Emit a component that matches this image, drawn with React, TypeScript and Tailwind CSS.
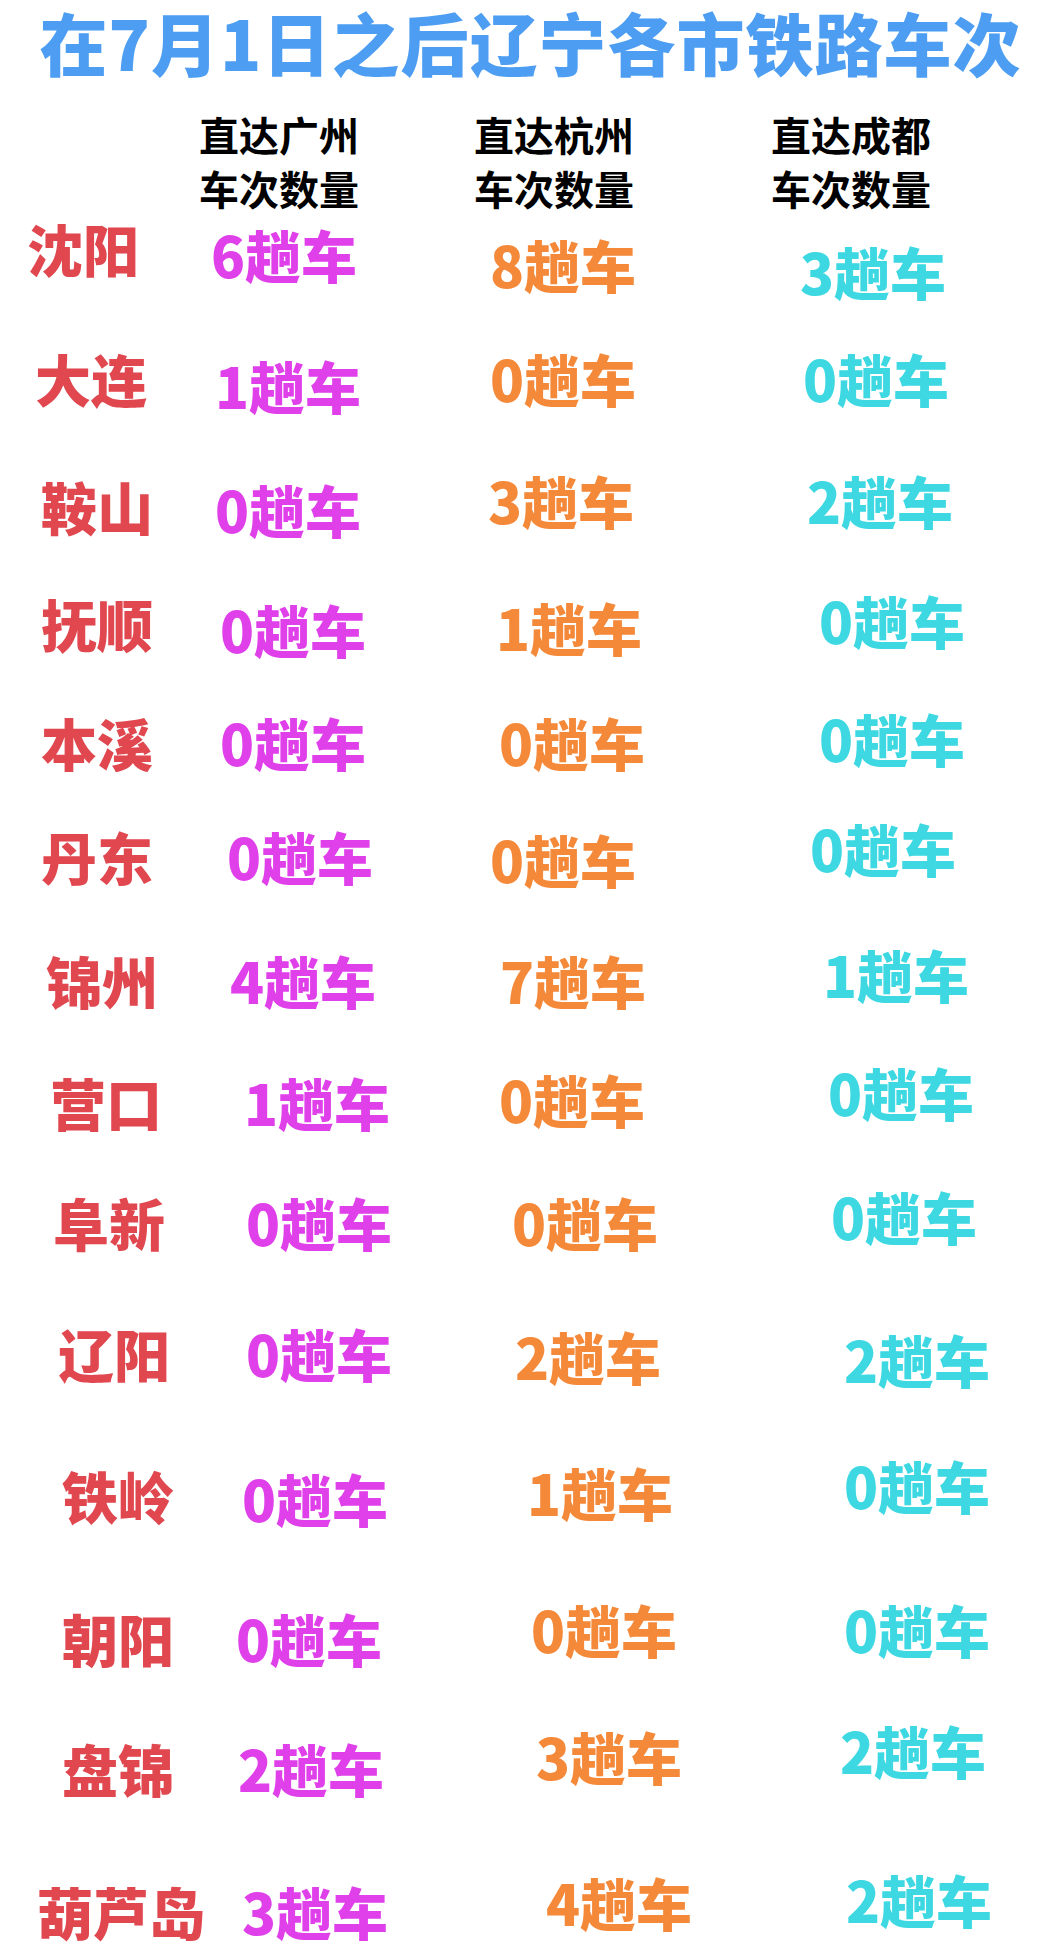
const CITY = "text-[#e0474f]";
const GZ = "text-[#e040ea]";
const HZ = "text-[#f5893a]";
const CD = "text-[#3dd8e2]";

// [city, cityX, cityY, gz, gzX, gzY, hz, hzX, hzY, cd, cdX, cdY]
type Row = [string, number, number, number, number, number, number, number, number, number, number, number];

const rows: Row[] = [
  ["沈阳", 27, 248, 6, 211, 254, 8, 490, 264, 3, 800, 271],
  ["大连", 35, 378, 1, 215, 385, 0, 490, 378, 0, 803, 378],
  ["鞍山", 41, 506, 0, 215, 509, 3, 488, 500, 2, 807, 500],
  ["抚顺", 41, 623, 0, 220, 629, 1, 496, 627, 0, 819, 620],
  ["本溪", 41, 742, 0, 220, 742, 0, 499, 742, 0, 819, 738],
  ["丹东", 41, 856, 0, 227, 856, 0, 490, 859, 0, 810, 848],
  ["锦州", 46, 980, 4, 230, 980, 7, 500, 980, 1, 823, 974],
  ["营口", 50, 1102, 1, 244, 1102, 0, 499, 1099, 0, 828, 1092],
  ["阜新", 53, 1222, 0, 246, 1222, 0, 512, 1222, 0, 831, 1216],
  ["辽阳", 58, 1353, 0, 246, 1353, 2, 515, 1356, 2, 844, 1359],
  ["铁岭", 62, 1495, 0, 242, 1498, 1, 527, 1492, 0, 844, 1485],
  ["朝阳", 62, 1638, 0, 236, 1638, 0, 531, 1629, 0, 844, 1629],
  ["盘锦", 62, 1768, 2, 238, 1768, 3, 536, 1756, 2, 840, 1750],
  ["葫芦岛", 37, 1911, 3, 242, 1911, 4, 546, 1902, 2, 846, 1899],
];

// column starts of the grid below
const COLS = [0, 200, 470, 790];

function Cell({ text, x, dy, col, color }: { text: string; x: number; dy: number; col: number; color: string }) {
  return (
    <div
      className={`whitespace-nowrap text-[56px] leading-none ${color}`}
      style={{ paddingLeft: x - COLS[col], marginTop: 2 + dy }}
    >
      {text}
    </div>
  );
}

export default function App() {
  return (
    <div
      className="w-[1051px] h-[1946px] bg-white overflow-hidden font-black"
      style={{ fontFamily: '"Noto Sans CJK SC", "Noto Sans", sans-serif' }}
    >
      {/* Title */}
      <h1 className="whitespace-nowrap text-center text-[68px] leading-[84px] tracking-[1px] pl-[10px] text-[#4d9ef2] font-black">
        在7月1日之后辽宁各市铁路车次
      </h1>

      {/* Column headers */}
      <div className="flex mt-[23px] text-[40px] leading-[54px] text-black font-bold">
        <div className="ml-[199px]">
          <div>直达广州</div>
          <div>车次数量</div>
        </div>
        <div className="ml-[115px]">
          <div>直达杭州</div>
          <div>车次数量</div>
        </div>
        <div className="ml-[137px]">
          <div>直达成都</div>
          <div>车次数量</div>
        </div>
      </div>

      {/* Rows */}
      <div className="mt-[3px]">
        {rows.map((r, i) => {
          const y = r[2];
          const next = i < rows.length - 1 ? rows[i + 1][2] : y + 60;
          return (
            <div key={r[0]} className="grid grid-cols-[200px_270px_320px_261px]" style={{ height: next - y }}>
              <Cell text={r[0]} x={r[1]} dy={0} col={0} color={CITY} />
              <Cell text={`${r[3]}趟车`} x={r[4]} dy={r[5] - y} col={1} color={GZ} />
              <Cell text={`${r[6]}趟车`} x={r[7]} dy={r[8] - y} col={2} color={HZ} />
              <Cell text={`${r[9]}趟车`} x={r[10]} dy={r[11] - y} col={3} color={CD} />
            </div>
          );
        })}
      </div>
    </div>
  );
}
